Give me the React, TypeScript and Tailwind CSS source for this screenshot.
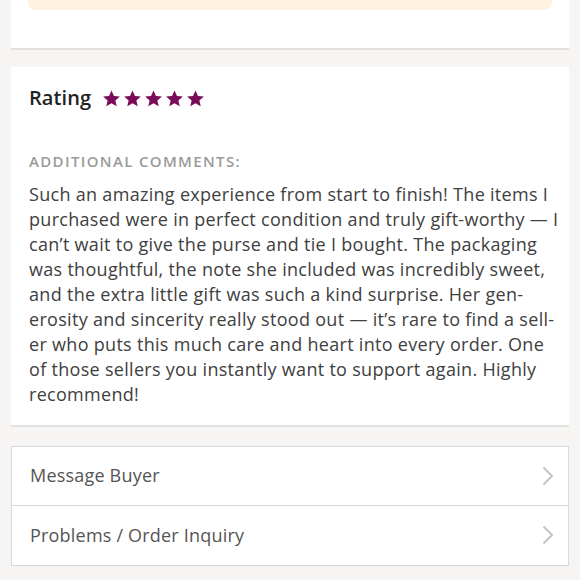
const lines = [
  "Such an amazing experience from start to finish! The items I",
  "purchased were in perfect condition and truly gift-worthy — I",
  "can’t wait to give the purse and tie I bought. The packaging",
  "was thoughtful, the note she included was incredibly sweet,",
  "and the extra little gift was such a kind surprise. Her gen-",
  "erosity and sincerity really stood out — it’s rare to find a sell-",
  "er who puts this much care and heart into every order. One",
  "of those sellers you instantly want to support again. Highly",
  "recommend!",
];

function Star() {
  return (
    <svg viewBox="0 0 24 24" className="w-[19px] h-[19px]" fill="#7b0c5a">
      <path d="M12 1.8l3.1 6.9 7.5.7-5.7 5 1.7 7.4L12 17.9l-6.6 3.9 1.7-7.4-5.7-5 7.5-.7z" />
    </svg>
  );
}

function Chevron() {
  return (
    <svg viewBox="0 0 12 20" className="w-[12px] h-[20px]" fill="none" stroke="#c4c4c4" strokeWidth={2}>
      <path d="M1.5 1.5L10 10l-8.5 8.5" />
    </svg>
  );
}

export default function App() {
  return (
    <div
      className="w-[580px] h-[580px] overflow-hidden bg-[#f7f5f4]"
      style={{ fontFamily: "'Open Sans', sans-serif" }}
    >
      {/* previous section tail */}
      <div className="mx-[11px] h-[50px] bg-white border-b-2 border-[#e3e1df]">
        <div className="mx-[17px] h-[10px] rounded-b-lg bg-[#fdf3e0]" />
      </div>

      {/* rating card */}
      <div className="mx-[11px] mt-[17px] bg-white border-b-2 border-[#e3e1df] px-[18px] pt-[18px] pb-[18px]">
        <div className="flex items-center gap-[11px] h-[26px]">
          <span className="text-[20px] font-semibold tracking-[0.1px] text-[#222]">Rating</span>
          <div className="flex gap-[2px]">
            <Star />
            <Star />
            <Star />
            <Star />
            <Star />
          </div>
        </div>
        <div className="mt-[39px] text-[15px] font-semibold tracking-[0.09em] text-[#9a9a9a]">
          ADDITIONAL COMMENTS:
        </div>
        <div className="mt-[9px] text-[18px] leading-[25px] tracking-[0.3px] text-[#404040]">
          {lines.map((l, i) => (
            <div key={i} className="whitespace-nowrap">
              {l}
            </div>
          ))}
        </div>
      </div>

      {/* actions */}
      <div className="mx-[11px] mt-[19px] bg-white border border-[#d8d8d8]">
        {["Message Buyer", "Problems / Order Inquiry"].map((t, i) => (
          <div
            key={t}
            className={`flex items-center justify-between h-[59px] pl-[18px] pr-[14px] ${
              i === 0 ? "border-b border-[#d8d8d8]" : ""
            }`}
          >
            <span className="text-[18px] tracking-[0.2px] text-[#555]">{t}</span>
            <Chevron />
          </div>
        ))}
      </div>
    </div>
  );
}
